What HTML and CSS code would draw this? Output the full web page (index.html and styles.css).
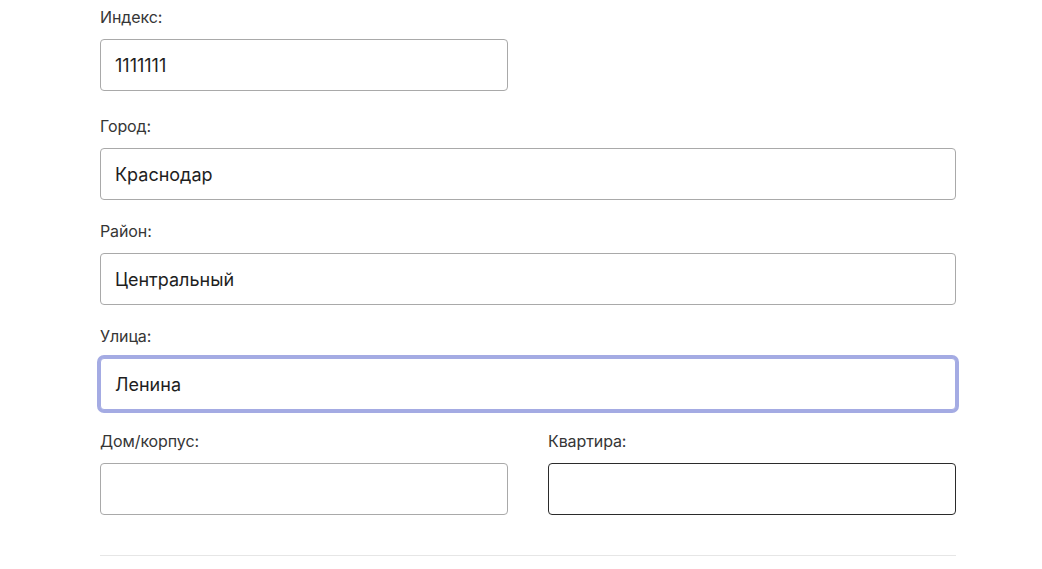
FILE: index.html
```html
<!DOCTYPE html>
<html lang="ru">
<head>
<meta charset="utf-8">
<link rel="stylesheet" href="styles.css">
</head>
<body>
<form class="form">
  <div class="row row-first">
    <div class="field">
      <label class="label">Индекс:</label>
      <div class="input">1111111</div>
    </div>
    <div class="field"></div>
  </div>
  <div class="field field-full">
    <label class="label">Город:</label>
    <div class="input">Краснодар</div>
  </div>
  <div class="field field-full">
    <label class="label">Район:</label>
    <div class="input">Центральный</div>
  </div>
  <div class="field field-full">
    <label class="label">Улица:</label>
    <div class="input input-focus">Ленина</div>
  </div>
  <div class="row">
    <div class="field">
      <label class="label">Дом/корпус:</label>
      <div class="input"></div>
    </div>
    <div class="field">
      <label class="label">Квартира:</label>
      <div class="input input-dark"></div>
    </div>
  </div>
  <div class="divider"></div>
</form>
</body>
</html>
```

FILE: styles.css
```css
html, body {
  margin: 0;
  padding: 0;
  background: #ffffff;
}

body {
  font-family: Inter, "Open Sans", "Liberation Sans", sans-serif;
  color: #222;
}

.form {
  width: 856px;
  margin-left: 100px;
  padding-top: 7px;
  display: flex;
  flex-direction: column;
  gap: 21px;
}

.row {
  display: grid;
  grid-template-columns: 1fr 1fr;
  column-gap: 40px;
}

.row-first {
  margin-bottom: 4px;
}

.field {
  display: flex;
  flex-direction: column;
}

.label {
  font-size: 16px;
  line-height: 20px;
  color: #363636;
  margin-bottom: 12px;
  font-weight: 400;
  letter-spacing: -0.1px;
}

.input {
  box-sizing: border-box;
  height: 52px;
  border: 1px solid #a9a9a9;
  border-radius: 4px;
  padding: 0 14px;
  display: flex;
  align-items: center;
  font-size: 18px;
  color: #1e1e1e;
  background: #fff;
}

.input-focus {
  border-color: #a4abe3;
  box-shadow: 0 0 0 3px #a4abe3;
}

.input-dark {
  border-color: #2b2b2b;
}

.divider {
  height: 1px;
  background: #e6e6e6;
  margin-top: 19px;
}
```
